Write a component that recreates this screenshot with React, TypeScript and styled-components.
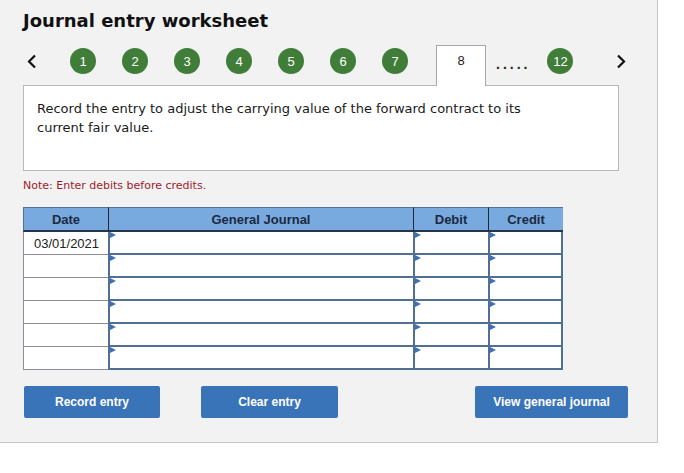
import React from 'react'
import styled, {createGlobalStyle} from 'styled-components'

const GlobalStyle = createGlobalStyle`
  body {
    margin: 0;
    background: #ffffff;
  }
`

const Panel = styled.div`
  box-sizing: border-box;
  width: 658px;
  height: 443px;
  padding: 10px 0 0 23px;
  background: #f2f2f2;
  border-right: 1px solid #c6c6c6;
  border-bottom: 1px solid #c6c6c6;
`

const Title = styled.h1`
  margin: 0;
  font-family: 'DejaVu Sans', Verdana, sans-serif;
  font-size: 18px;
  line-height: 21px;
  font-weight: bold;
  color: #111;
`

const Nav = styled.div`
  display: flex;
  align-items: flex-start;
  height: 40px;
  margin-top: 14px;
`

const Slot = styled.div<{ml: number}>`
  display: flex;
  align-items: center;
  height: 32px;
  margin-left: ${(p) => p.ml}px;
`

const Circle = styled.div`
  width: 26px;
  height: 26px;
  border-radius: 50%;
  background: #3f7d39;
  color: #fff;
  display: flex;
  align-items: center;
  justify-content: center;
  font-family: 'Liberation Sans', Arial, sans-serif;
  font-size: 13px;
`

const Tab = styled.div<{ml: number}>`
  position: relative;
  z-index: 1;
  box-sizing: border-box;
  width: 50px;
  height: 41px;
  margin-left: ${(p) => p.ml}px;
  background: #fff;
  border: 1px solid #a8a8a8;
  border-bottom: none;
  text-align: center;
  line-height: 30px;
  font-family: 'Liberation Sans', Arial, sans-serif;
  font-size: 13px;
  color: #222;
`

const Dots = styled.span`
  font-family: 'Liberation Sans', Arial, sans-serif;
  font-size: 14px;
  font-weight: bold;
  letter-spacing: 3px;
  color: #222;
  padding-top: 5px;
`

const Instructions = styled.div`
  box-sizing: border-box;
  width: 596px;
  height: 86px;
  padding: 13px 0 0 13px;
  background: #fff;
  border: 1px solid #b9b9b9;
`

const Prompt = styled.p`
  margin: 0;
  max-width: 510px;
  font-family: 'DejaVu Sans', Verdana, sans-serif;
  font-size: 13px;
  line-height: 19px;
  color: #1a1a1a;
`

const Note = styled.p`
  margin: 7px 0 0;
  font-family: 'DejaVu Sans', Verdana, sans-serif;
  font-size: 11px;
  line-height: 16px;
  color: #a01a2c;
`

const Grid = styled.div`
  display: grid;
  grid-template-columns: 85px 305px 75px 75px;
  width: 540px;
  margin-top: 13px;
`

const Head = styled.div<{first?: boolean}>`
  box-sizing: border-box;
  height: 25px;
  background: #78aae0;
  border-top: 1px solid #58708f;
  border-left: 1px solid ${(p) => (p.first ? '#58708f' : '#1d2838')};
  border-bottom: 2px solid #24344a;
  display: flex;
  align-items: center;
  justify-content: center;
  font-family: 'Liberation Sans', Arial, sans-serif;
  font-size: 13px;
  font-weight: bold;
  color: #1c2940;
  &:last-child {
    border-right: 1px solid #58708f;
  }
`

const DateCell = styled.div`
  box-sizing: border-box;
  height: 23px;
  padding-left: 10px;
  background: #fff;
  border-left: 1px solid #8a8f96;
  border-bottom: 1px solid #8a8f96;
  display: flex;
  align-items: center;
  font-family: 'Liberation Sans', Arial, sans-serif;
  font-size: 13px;
  color: #222;
`

const InputCell = styled.div<{last?: boolean}>`
  position: relative;
  box-sizing: border-box;
  height: 23px;
  background: #fff;
  border-left: 2px solid #516e93;
  border-bottom: 2px solid #516e93;
  border-right: ${(p) => (p.last ? '2px solid #516e93' : 'none')};
  &::before {
    content: '';
    position: absolute;
    left: 0;
    top: 0;
    border-top: 3px solid transparent;
    border-bottom: 3px solid transparent;
    border-left: 6px solid #3f70b6;
  }
`

const Actions = styled.div`
  display: flex;
  margin: 16px 0 0 1px;
`

const Button = styled.button<{w: number; ml?: number}>`
  box-sizing: border-box;
  width: ${(p) => p.w}px;
  height: 32px;
  margin-left: ${(p) => p.ml || 0}px;
  padding: 0;
  border: none;
  border-radius: 2px;
  background: #3a74b8;
  color: #fff;
  font-family: 'Liberation Sans', Arial, sans-serif;
  font-size: 12px;
  font-weight: bold;
`

const Chevron = ({dir}: {dir: 'left' | 'right'}) => (
  <svg width="10" height="15" viewBox="0 0 10 15">
    <polyline
      points={dir === 'left' ? '8,1.5 2,7.5 8,13.5' : '2,1.5 8,7.5 2,13.5'}
      fill="none"
      stroke="#111"
      strokeWidth="2.2"
    />
  </svg>
)

const steps = [1, 2, 3, 4, 5, 6, 7]

export default function App() {
  const rows = ['03/01/2021', '', '', '', '', '']
  return (
    <>
      <GlobalStyle />
      <Panel>
        <Title>Journal entry worksheet</Title>
        <Nav>
          <Slot ml={4}>
            <Chevron dir="left" />
          </Slot>
          {steps.map((n, i) => (
            <Slot key={n} ml={i === 0 ? 33 : 26}>
              <Circle>{n}</Circle>
            </Slot>
          ))}
          <Tab ml={28}>8</Tab>
          <Slot ml={10}>
            <Dots>.....</Dots>
          </Slot>
          <Slot ml={17}>
            <Circle>12</Circle>
          </Slot>
          <Slot ml={43}>
            <Chevron dir="right" />
          </Slot>
        </Nav>
        <Instructions>
          <Prompt>
            Record the entry to adjust the carrying value of the forward contract to its current
            fair value.
          </Prompt>
        </Instructions>
        <Note>Note: Enter debits before credits.</Note>
        <Grid>
          <Head first>Date</Head>
          <Head>General Journal</Head>
          <Head>Debit</Head>
          <Head>Credit</Head>
          {rows.map((d, i) => (
            <React.Fragment key={i}>
              <DateCell>{d}</DateCell>
              <InputCell />
              <InputCell />
              <InputCell last />
            </React.Fragment>
          ))}
        </Grid>
        <Actions>
          <Button w={136}>Record entry</Button>
          <Button w={137} ml={41}>
            Clear entry
          </Button>
          <Button w={153} ml={137}>
            View general journal
          </Button>
        </Actions>
      </Panel>
    </>
  )
}
